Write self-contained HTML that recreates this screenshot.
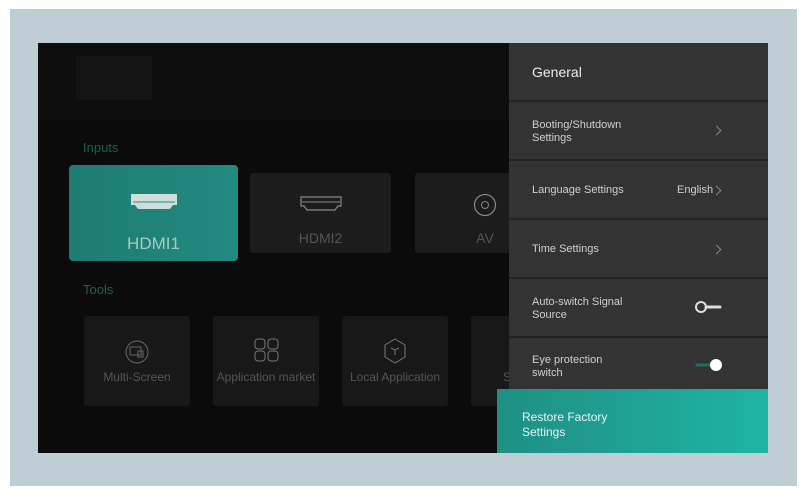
<!DOCTYPE html>
<html><head><meta charset="utf-8"><style>
*{margin:0;padding:0;box-sizing:border-box}
body{width:806px;height:504px;background:#fff;font-family:"Liberation Sans",sans-serif;position:relative;overflow:hidden}
.frame{position:absolute;left:10px;top:9px;width:787px;height:477px;background:#bfcdd5}
.screen{position:absolute;left:38px;top:43px;width:730px;height:410px;background:#0b0b0c;overflow:hidden}
.top{position:absolute;left:0;top:0;width:730px;height:77px;background:#0e0e0f}
.logo{position:absolute;left:38px;top:13px;width:76px;height:44px;background:#141414}
.lbl{position:absolute;color:#1f5f50;font-size:13px}
.card{position:absolute;background:#1c1c1d;border-radius:3px;color:#555;text-align:center}
.sel{background:linear-gradient(90deg,#1e7c73,#218a80);color:#a9c9c5;border-radius:4px}
.panel{position:absolute;left:471px;top:0;width:259px;height:410px;background:#232323}
.row{position:absolute;left:0;width:259px;background:#333;color:#d0d0d0;font-size:11px;line-height:13px}
.row .t{position:absolute;left:23px}
.chev{position:absolute;left:204px;width:7px;height:7px;border-right:1px solid #888;border-top:1px solid #888;transform:rotate(45deg)}
.restore{position:absolute;left:459px;top:346px;width:271px;height:64px;background:linear-gradient(90deg,#1f8f84,#1eb5a3);color:#e8f5f3;font-size:12px;line-height:15px;padding:21px 0 0 25px}
</style></head><body>
<div class="frame"></div>
<div class="screen">
 <div class="top"><div class="logo"></div></div>
 <div class="lbl" style="left:45px;top:97px">Inputs</div>
 <div class="card sel" style="left:31px;top:122px;width:169px;height:96px">
  <svg style="position:absolute;left:61px;top:28px" width="48" height="18"><path d="M1 1h46v11h-4l-3 4H8l-3-4H1z" fill="#cfdedb"/><path d="M3 9h42" stroke="#2a8a80" stroke-width="1"/></svg>
  <div style="position:absolute;left:0;right:0;top:69px;font-size:17px">HDMI1</div></div>
 <div class="card" style="left:212px;top:130px;width:141px;height:80px">
  <svg style="position:absolute;left:50px;top:23px" width="42" height="16"><path d="M1 1h40v9h-3l-3 4H7l-3-4H1z" fill="none" stroke="#888" stroke-width="1.2"/><path d="M2 6h38" stroke="#888"/></svg>
  <div style="position:absolute;left:0;right:0;top:57px;font-size:14px">HDMI2</div></div>
 <div class="card" style="left:377px;top:130px;width:100px;height:80px">
  <svg style="position:absolute;left:58px;top:20px" width="24" height="24"><circle cx="12" cy="12" r="10.5" fill="none" stroke="#888" stroke-width="1.2"/><circle cx="12" cy="12" r="3.5" fill="none" stroke="#888"/></svg>
  <div style="position:absolute;left:58px;width:24px;top:57px;font-size:14px">AV</div></div>
 <div class="lbl" style="left:45px;top:239px">Tools</div>
 <div class="card" style="left:46px;top:273px;width:106px;height:90px;background:#181818">
  <svg style="position:absolute;left:41px;top:24px" width="24" height="24"><circle cx="12" cy="12" r="11" fill="none" stroke="#666"/><rect x="5" y="7" width="11" height="8" fill="none" stroke="#666"/><rect x="13" y="11" width="5" height="6" fill="none" stroke="#666"/></svg>
  <div style="position:absolute;left:0;right:0;top:54px;font-size:12px">Multi-Screen</div></div>
 <div class="card" style="left:175px;top:273px;width:106px;height:90px;background:#181818">
  <svg style="position:absolute;left:41px;top:22px" width="26" height="24"><rect x="1" y="1" width="10" height="10" rx="3" fill="none" stroke="#777"/><rect x="14" y="1" width="10" height="10" rx="3" fill="none" stroke="#777"/><rect x="1" y="13" width="10" height="10" rx="3" fill="none" stroke="#777"/><rect x="14" y="13" width="10" height="10" rx="3" fill="none" stroke="#777"/></svg>
  <div style="position:absolute;left:0;right:0;top:54px;font-size:12px;white-space:nowrap">Application market</div></div>
 <div class="card" style="left:304px;top:273px;width:106px;height:90px;background:#181818">
  <svg style="position:absolute;left:41px;top:22px" width="24" height="26"><path d="M12 1l10 6v12l-10 6-10-6V7z" fill="none" stroke="#777"/><path d="M8 10l4 2 4-2M12 12v5" fill="none" stroke="#777"/></svg>
  <div style="position:absolute;left:0;right:0;top:54px;font-size:12px;white-space:nowrap">Local Application</div></div>
 <div class="card" style="left:433px;top:273px;width:60px;height:90px;background:#181818">
  <div style="position:absolute;left:32px;top:54px;font-size:12px">S</div></div>
 <div class="panel">
  <div class="row" style="top:0;height:57px;background:#333"><div class="t" style="top:23px;font-size:14px;color:#eee">General</div></div>
  <div class="row" style="top:59px;height:57px"><div class="t" style="top:17px">Booting/Shutdown<br>Settings</div><div class="chev" style="top:25px"></div></div>
  <div class="row" style="top:118px;height:57px"><div class="t" style="top:23px">Language Settings</div><div style="position:absolute;left:168px;top:23px">English</div><div class="chev" style="top:26px"></div></div>
  <div class="row" style="top:177px;height:57px"><div class="t" style="top:23px">Time Settings</div><div class="chev" style="top:26px"></div></div>
  <div class="row" style="top:236px;height:57px"><div class="t" style="top:17px">Auto-switch Signal<br>Source</div>
   <svg style="position:absolute;left:185px;top:20px" width="30" height="16"><path d="M12 8h14" stroke="#ddd" stroke-width="3" stroke-linecap="round"/><circle cx="7" cy="8" r="5" fill="none" stroke="#ddd" stroke-width="2"/></svg></div>
  <div class="row" style="top:295px;height:60px"><div class="t" style="top:16px">Eye protection<br>switch</div>
   <svg style="position:absolute;left:185px;top:19px" width="30" height="16"><path d="M3 8h18" stroke="#1e6e66" stroke-width="3" stroke-linecap="round"/><circle cx="22" cy="8" r="6" fill="#fff"/></svg></div>
 </div>
 <div class="restore">Restore Factory<br>Settings</div>
</div>
</body></html>
